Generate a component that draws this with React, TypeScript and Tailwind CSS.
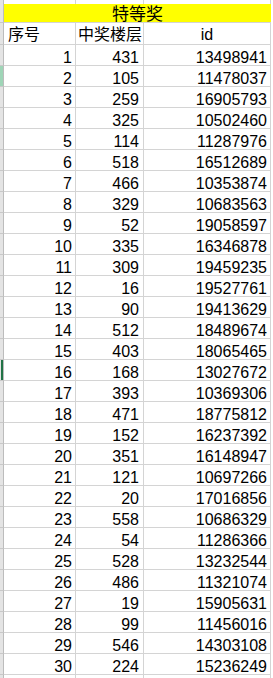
import React from 'react';

const rows: [number, number, number][] = [
  [1, 431, 13498941],
  [2, 105, 11478037],
  [3, 259, 16905793],
  [4, 325, 10502460],
  [5, 114, 11287976],
  [6, 518, 16512689],
  [7, 466, 10353874],
  [8, 329, 10683563],
  [9, 52, 19058597],
  [10, 335, 16346878],
  [11, 309, 19459235],
  [12, 16, 19527761],
  [13, 90, 19413629],
  [14, 512, 18489674],
  [15, 403, 18065465],
  [16, 168, 13027672],
  [17, 393, 10369306],
  [18, 471, 18775812],
  [19, 152, 16237392],
  [20, 351, 16148947],
  [21, 121, 10697266],
  [22, 20, 17016856],
  [23, 558, 10686329],
  [24, 54, 11286366],
  [25, 528, 13232544],
  [26, 486, 11321074],
  [27, 19, 15905631],
  [28, 99, 11456016],
  [29, 546, 14303108],
  [30, 224, 15236249],
];

const cjk = "font-['Noto_Sans_CJK_SC',sans-serif]";
const num = "font-['Liberation_Sans',Arial,sans-serif]";

// left row-header edge, 3px + 1px border
const Gutter = ({ kind }: { kind?: 'sel' | 'active' }) => (
  <div
    className={`w-[4px] shrink-0 border-r border-b border-r-[#bcbcbc] border-b-[#c8c8c8] ${
      kind === 'sel' ? 'bg-[#9fd5b7]' : 'bg-[#e4e4e4]'
    } flex`}
  >
    {kind === 'active' && <div className="ml-[1px] w-[2px] bg-[#217346]" />}
  </div>
);

export default function App() {
  return (
    <div className="w-[273px] h-[678px] overflow-hidden bg-white text-black flex flex-col">
      {/* partial row above */}
      <div className="flex h-[4px] shrink-0">
        <div className="w-[4px] shrink-0 bg-[#e4e4e4] border-r border-[#bcbcbc]" />
        <div className="w-[72px] shrink-0 border-r border-[#d4d4d4]" />
        <div className="w-[68px] shrink-0 border-r border-[#d4d4d4]" />
        <div className="w-[127px] shrink-0 border-r border-[#d4d4d4]" />
      </div>

      {/* title */}
      <div className="flex h-[19px] shrink-0">
        <Gutter />
        <div
          className={`w-[267px] shrink-0 bg-[#ffff00] border-b border-[#d4d4d4] text-center text-[17px] leading-[18px] ${cjk}`}
        >
          特等奖
        </div>
      </div>

      {/* header */}
      <div className="flex h-[22px] shrink-0">
        <Gutter />
        <div
          className={`w-[72px] shrink-0 border-r border-b border-[#d4d4d4] pl-[4px] text-[16px] leading-[21px] ${cjk}`}
        >
          序号
        </div>
        <div
          className={`w-[68px] shrink-0 border-r border-b border-[#d4d4d4] pl-[2px] text-[16px] leading-[21px] whitespace-nowrap ${cjk}`}
        >
          中奖楼层
        </div>
        <div
          className={`w-[127px] shrink-0 border-r border-b border-[#d4d4d4] text-center text-[16px] leading-[23px] overflow-hidden ${num}`}
        >
          id
        </div>
      </div>

      {rows.map(([n, floor, id]) => (
        <div key={n} className={`flex h-[21px] shrink-0 text-[16px] leading-[26px] ${num}`}>
          <Gutter kind={n === 2 ? 'sel' : n === 16 ? 'active' : undefined} />
          <div className="w-[72px] shrink-0 border-r border-b border-[#d4d4d4] pr-[3px] text-right overflow-hidden">
            {n}
          </div>
          <div className="w-[68px] shrink-0 border-r border-b border-[#d4d4d4] pr-[4px] text-right overflow-hidden">
            {floor}
          </div>
          <div className="w-[127px] shrink-0 border-r border-b border-[#d4d4d4] pr-[3px] text-right overflow-hidden">
            {id}
          </div>
        </div>
      ))}

      {/* partial row below */}
      <div className="flex flex-1">
        <div className="w-[4px] shrink-0 bg-[#e4e4e4] border-r border-[#bcbcbc]" />
        <div className="w-[72px] shrink-0 border-r border-[#d4d4d4]" />
        <div className="w-[68px] shrink-0 border-r border-[#d4d4d4]" />
        <div className="w-[127px] shrink-0 border-r border-[#d4d4d4]" />
      </div>
    </div>
  );
}
